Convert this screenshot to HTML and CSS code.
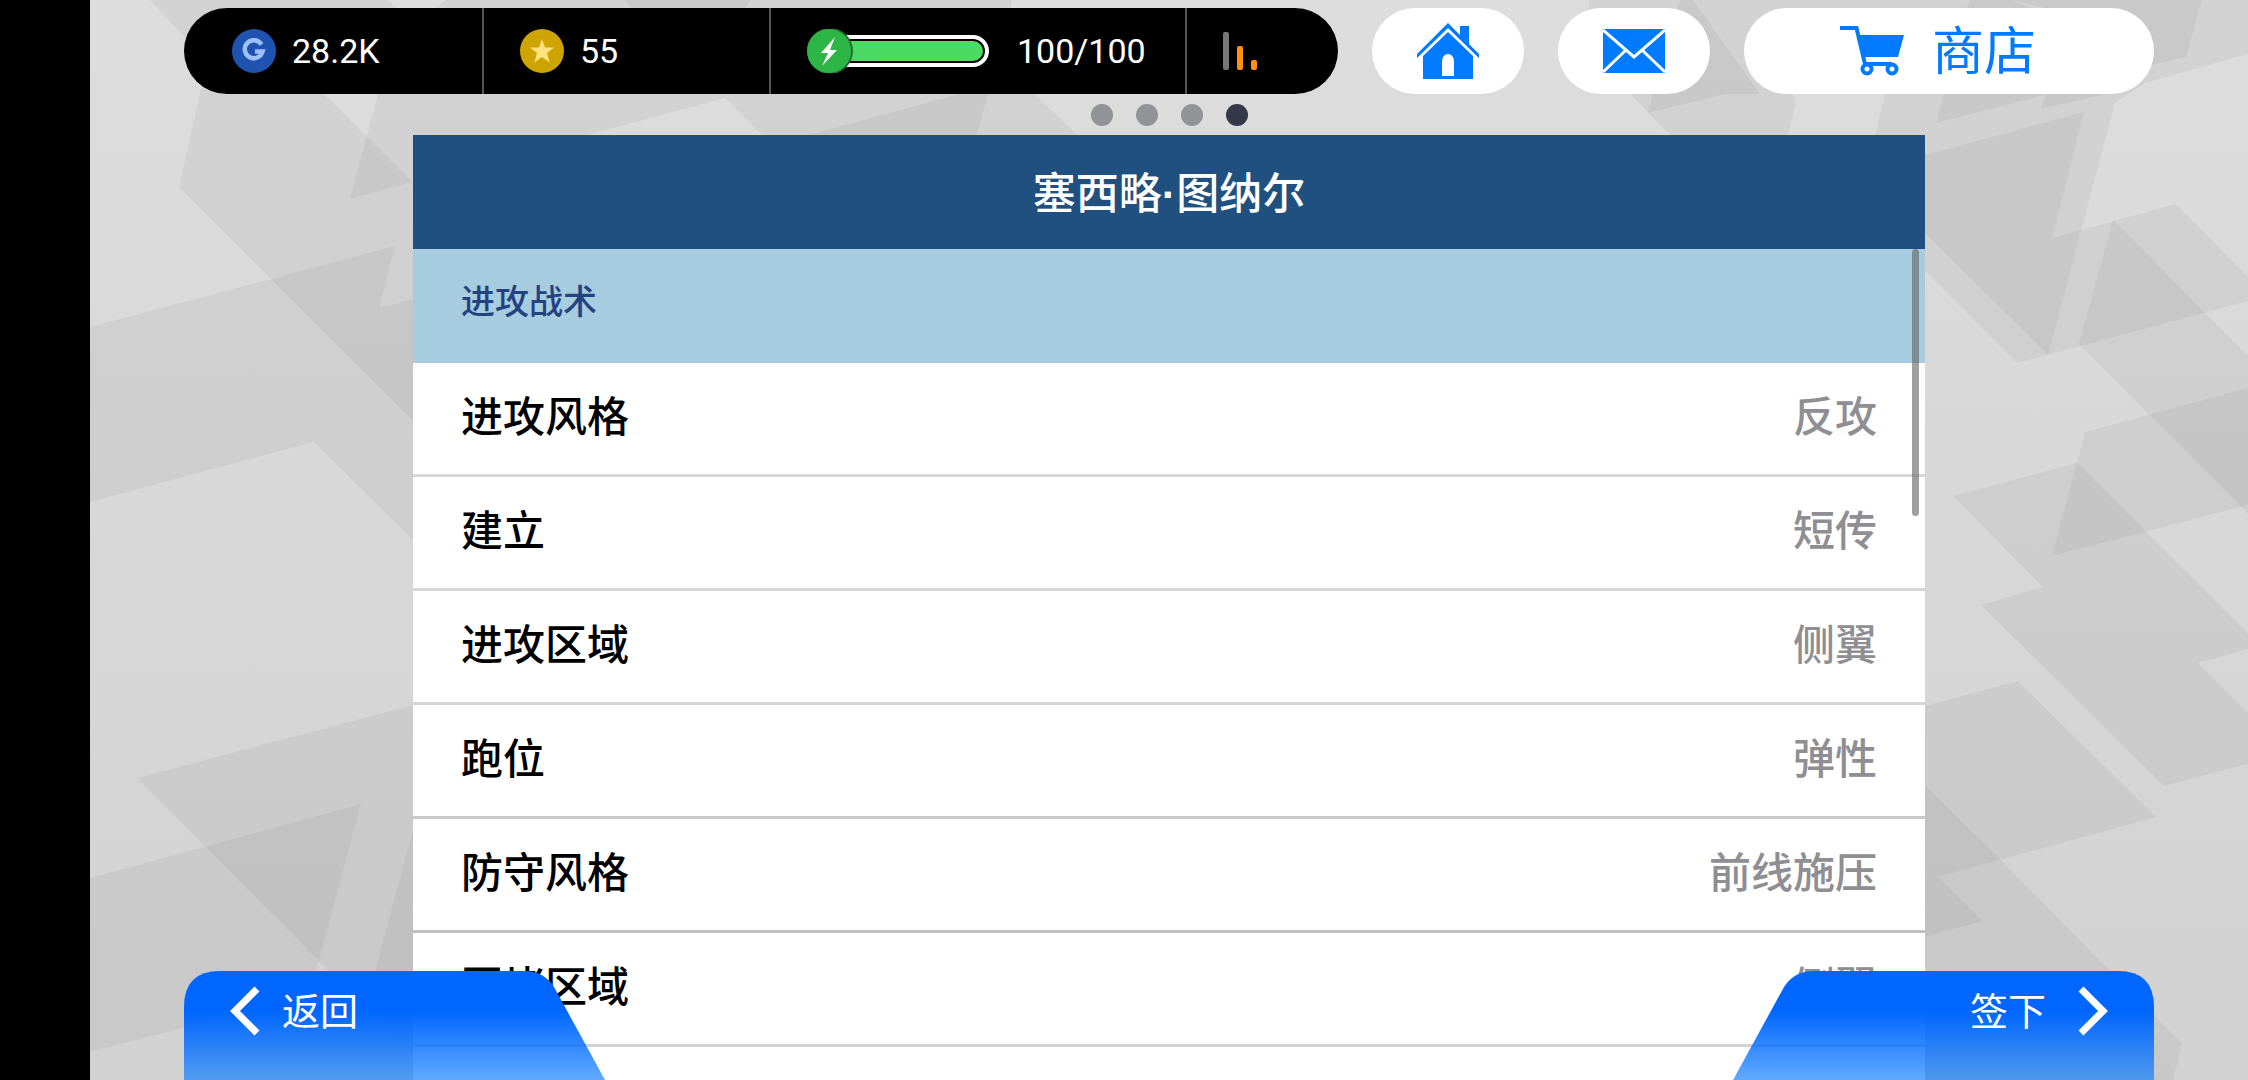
FILE: index.html
```html
<!DOCTYPE html>
<html lang="zh-CN">
<head>
<meta charset="utf-8">
<meta name="viewport" content="width=device-width, initial-scale=1">
<title>塞西略·图纳尔</title>
<link rel="stylesheet" href="styles.css">
</head>
<body>
<div class="app">
  <svg class="backdrop" viewBox="90 0 2158 1080" preserveAspectRatio="xMidYMin slice" aria-hidden="true">
    <g fill="#000" fill-opacity=".045">
      <path d="M150 0H388L413 24 300 70 413 183V421L179 187 207 62Z"/>
      <path d="M445 0H1012L1000 60 1077 135H762L725 98 350 199 378 94 400 40Z"/>
      <path d="M808 135 959 94H988L977 135Z"/>
      <path d="M625 0H751L745 9H632Z"/>
      <path d="M90 327 395 246 379 308 413 299V540L314 442 90 502Z"/>
      <path d="M137 778 413 705V971L1925 971V780H413V1056Z"/>
      <path d="M90 878 361 804 316 971 290 1000 183 1028 90 1052Z"/>
      <path d="M413 830H1925V960H413V971H375Z"/>
      <path d="M1590 0H2248V54L2145 83 2115 103 2048 355 1925 233 1875 135 1885 94 1900 60H1780L1796 102 1788 135H1670L1630 94 1580 50Z"/>
      <path d="M1680 0H1693L1760 94H1726L1648 113 1660 60Z"/>
      <path d="M1944 94H2048L1936 123Z"/>
      <path d="M2046 94H2106L2041 109Z"/>
      <path d="M1970 0H2013L2040 12H1965Z"/>
      <path d="M2202 0 2186 57 2130 70 2060 12 2013 0Z"/>
      <path d="M1925 155 2084 112 2052 238 2176 204 2248 277V301L2017 363 1925 271Z"/>
      <path d="M2113 220 2079 344 2248 514V356Z"/>
      <path d="M2085 432 2248 388V505L2052 556Z"/>
      <path d="M1953 496 2077 463 2248 634V649L2198 663 2248 713V764L2164 786 1981 605 2043 587Z"/>
      <path d="M1925 706 2018 681 2156 817 1938 877 1983 921 1925 937Z"/>
      <path d="M1925 785 2000 859 2110 971 2182 1043 2173 1080H1925Z"/>
    </g>
  </svg>

  <header class="topbar">
    <div class="status">
      <div class="stat stat-gp">
        <svg class="coin" viewBox="0 0 44 44" aria-hidden="true"><circle cx="22" cy="22" r="22" fill="#1e53b0"/><path d="M29.500 15.500A9 9 0 1 0 30.500 22.500H23" fill="none" stroke="#9dc0ff" stroke-width="4.500"/></svg>
        <span>28.2K</span>
      </div>
      <div class="stat">
        <svg class="coin" viewBox="0 0 44 44" aria-hidden="true"><circle cx="22" cy="22" r="22" fill="#cda400"/><path d="M22 10l3 8.500h9l-7 5.500 2.700 9.500L22 28l-7.700 5.500L17 24l-7-5.500h9z" fill="#ffe37d"/></svg>
        <span>55</span>
      </div>
      <div class="stat stat-energy">
        <svg class="energy" viewBox="0 0 182 44" aria-hidden="true">
          <rect x="22" y="8" width="158" height="28" rx="14" fill="#000" stroke="#fff" stroke-width="4"/>
          <rect x="24" y="12" width="152" height="20" rx="10" fill="#4cd964"/>
          <circle cx="23" cy="22" r="23" fill="#1c6f30"/>
          <circle cx="22" cy="22" r="22" fill="#2db546"/>
          <path d="M28 8 14 24h7L15 37 30 21h-7z" fill="#fff"/>
        </svg>
        <span>100/100</span>
      </div>
      <div class="stat">
        <svg width="34" height="38" viewBox="0 0 34 38" role="img" aria-label="信号"><rect width="6" height="38" rx="2" fill="#777"/><rect x="14" y="14" width="6" height="24" rx="2" fill="#ff9010"/><rect x="28" y="28" width="6" height="10" rx="2" fill="#ff9010"/></svg>
      </div>
    </div>
    <button class="pill" type="button" aria-label="主页">
      <svg width="62" height="56" viewBox="0 0 62 56" fill="#007aff" aria-hidden="true"><path d="M31 0 43 12V3h9v18L62 31v4L31 5 0 35v-4z"/><path fill-rule="evenodd" d="M31 9 56 33V56H6V33ZM25 53H37V38a6 7 0 0 0-12 0Z"/></svg>
    </button>
    <button class="pill" type="button" aria-label="邮件">
      <svg width="62" height="44" viewBox="0 0 62 44" aria-hidden="true"><path fill="#007aff" d="M0 0h62v44H0z"/><path d="M0 1 31 28 62 1M0 43 23 21M62 43 39 21" fill="none" stroke="#fff" stroke-width="3"/></svg>
    </button>
    <button class="pill pill-shop" type="button">
      <svg width="64" height="50" viewBox="0 0 64 50" aria-hidden="true"><path fill="#007aff" d="M18 9H64L58 31H23Z"/><path d="M0 2H16.500L25 38H52" fill="none" stroke="#007aff" stroke-width="4"/><circle cx="27" cy="43" r="4.500" fill="#fff" stroke="#007aff" stroke-width="4"/><circle cx="52" cy="43" r="4.500" fill="#fff" stroke="#007aff" stroke-width="4"/></svg>
      <span>商店</span>
    </button>
  </header>

  <div class="pager" aria-label="第 4 页，共 4 页"><i></i><i></i><i></i><i class="current"></i></div>

  <main class="panel">
    <h1 class="title">塞西略<span class="dot">·</span>图纳尔</h1>
    <section class="list">
      <h2 class="section">进攻战术</h2>
      <dl class="rows">
        <div class="row"><dt>进攻风格</dt><dd>反攻</dd></div>
        <div class="row"><dt>建立</dt><dd>短传</dd></div>
        <div class="row"><dt>进攻区域</dt><dd>侧翼</dd></div>
        <div class="row"><dt>跑位</dt><dd>弹性</dd></div>
        <div class="row"><dt>防守风格</dt><dd>前线施压</dd></div>
        <div class="row"><dt>围堵区域</dt><dd>侧翼</dd></div>
        <div class="row"><dt>施压</dt><dd>积极进取</dd></div>
      </dl>
      <div class="scrollbar"></div>
    </section>
  </main>

  <footer class="actions">
    <button class="action action-back" type="button">
      <svg width="30" height="50" viewBox="0 0 30 50" aria-hidden="true"><path d="M27 3 5 25 27 47" fill="none" stroke="#fff" stroke-width="7"/></svg>
      <span>返回</span>
    </button>
    <button class="action action-sign" type="button">
      <span>签下</span>
      <svg width="30" height="50" viewBox="0 0 30 50" aria-hidden="true"><path d="M3 3 25 25 3 47" fill="none" stroke="#fff" stroke-width="7"/></svg>
    </button>
  </footer>
</div>
</body>
</html>
```
FILE: styles.css
```css
* {
  box-sizing: border-box;
}

body {
  margin: 0;
  padding-left: 90px;
  background: #000;
  font-family: "Noto Sans CJK SC", sans-serif;
  overflow: hidden;
}

h1,
h2,
dl,
dd {
  margin: 0;
}

button {
  border: 0;
  font-family: inherit;
  cursor: pointer;
}

.app {
  position: relative;
  display: flex;
  flex-direction: column;
  height: 100vh;
  overflow: hidden;
  background: linear-gradient(#dddddd, #d2d2d2);
}

.backdrop {
  position: absolute;
  inset: 0;
  width: 100%;
  height: 100%;
}

/* Top bar */
.topbar {
  position: relative;
  display: flex;
  gap: 34px;
  height: 94px;
  padding: 8px 94px 0;
}

.status {
  display: grid;
  flex: 1;
  grid-template-columns: 298fr 287fr 416fr 153fr;
  border-radius: 43px;
  background: #000;
  color: #fff;
  font-family: Roboto, sans-serif;
  font-size: 34px;
  line-height: 44px;
}

.stat {
  display: flex;
  align-items: center;
  gap: 16px;
  padding-left: 36px;
}

.stat + .stat {
  border-left: 2px solid #555;
}

.stat-gp {
  padding-left: 48px;
}

.stat-energy {
  gap: 28px;
}

.coin {
  width: 44px;
  height: 44px;
}

.energy {
  width: 182px;
  height: 44px;
}

.pill {
  display: flex;
  align-items: center;
  justify-content: center;
  gap: 28px;
  width: 152px;
  padding: 0;
  border-radius: 43px;
  background: #fff;
  color: #007aff;
}

.pill-shop {
  width: 410px;
  padding-right: 22px;
  font-size: 52px;
  line-height: 60px;
}

.pill-shop span {
  padding-bottom: 6px;
}

/* Page dots */
.pager {
  position: relative;
  display: flex;
  justify-content: center;
  gap: 23px;
  padding: 10px 0 9px;
}

.pager i {
  width: 22px;
  height: 22px;
  border-radius: 50%;
  background: #929397;
}

.pager .current {
  background: #35374b;
}

/* Tactics panel */
.panel {
  position: relative;
  display: flex;
  flex: 1;
  flex-direction: column;
  min-height: 0;
  margin: 0 323px;
}

.title {
  padding: 25px 50px 29px;
  background: #20507f;
  color: #fff;
  font-size: 43px;
  font-weight: 500;
  line-height: 60px;
  text-align: center;
}

.dot {
  font-family: "Liberation Sans", sans-serif;
  font-weight: 700;
  line-height: 0;
}

.list {
  position: relative;
  flex: 1;
  min-height: 0;
  overflow: hidden;
}

.section {
  padding: 26px 48px 38px;
  background: #a7cbdf;
  color: #23427f;
  font-size: 34px;
  font-weight: 500;
  line-height: 50px;
}

.rows {
  display: grid;
  gap: 3px;
}

.row {
  display: flex;
  justify-content: space-between;
  padding: 21px 48px 30px;
  background: #fff;
  font-size: 42px;
  font-weight: 500;
  line-height: 60px;
}

.row dd {
  color: #8e8e93;
}

.scrollbar {
  position: absolute;
  top: 0;
  right: 6px;
  width: 7px;
  height: 267px;
  border-radius: 4px;
  background: rgba(100, 100, 100, .62);
}

/* Bottom actions */
.actions {
  position: absolute;
  right: 94px;
  bottom: 0;
  left: 94px;
  display: flex;
  justify-content: space-between;
}

.action {
  display: flex;
  align-items: center;
  width: 421px;
  height: 109px;
  padding: 0 46px 30px;
  background: linear-gradient(#06f 0%, #06f 36%, rgba(20, 128, 255, .67) 100%);
  color: #fff;
  font-size: 38px;
  line-height: 50px;
}

.action span {
  padding-bottom: 4px;
}

.action-back {
  gap: 22px;
  clip-path: path("M0 109V36Q0 0 36 0H340Q360 0 370 16L421 109Z");
}

.action-sign {
  justify-content: flex-end;
  gap: 32px;
  clip-path: path("M421 109V36Q421 0 385 0H81Q61 0 51 16L0 109Z");
}
```
